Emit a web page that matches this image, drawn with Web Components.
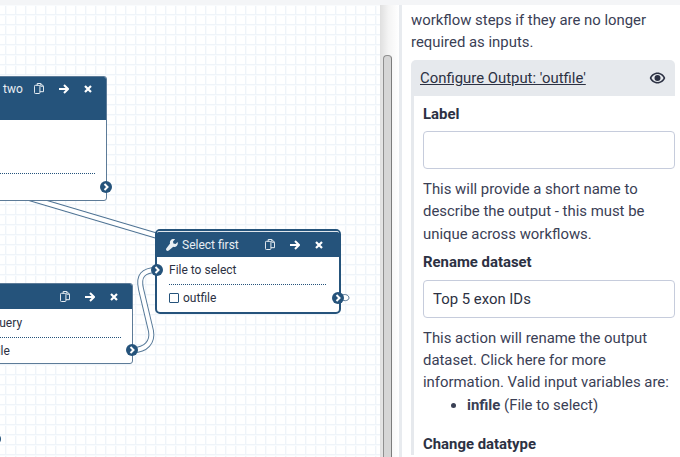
<!DOCTYPE html>
<html>
<head>
<meta charset="utf-8">
<style>
  html, body { margin: 0; height: 100%; overflow: hidden; }
  body { font-family: Roboto, "Liberation Sans", sans-serif; color: #2c3143; }
</style>
</head>
<body>
<wf-editor>
  <wf-canvas slot="canvas">
    <wf-node style="left:-30px;top:71px;width:137px;height:125px" title-text="two" title-left="32" header-height="43" header-pad="20" output-y="110" rule-y="96"></wf-node>
    <wf-node style="left:-23px;top:278px;width:156px;height:81px" header-height="25" output-y="66">
      <wf-row>Query</wf-row>
      <wf-row ruled>File</wf-row>
    </wf-node>
    <wf-node active tool style="left:155px;top:224px;width:186px;height:85px" title-text="Select first" title-left="9" header-height="26" input-y="39" output-y="67">
      <wf-row>File to select</wf-row>
      <wf-row ruled check>outfile</wf-row>
    </wf-node>
  </wf-canvas>
  <wf-side slot="side">
    <p>workflow steps if they are no longer required as inputs.</p>
    <wf-output-panel heading="Configure Output: 'outfile'">
      <wf-field label="Label" value="" help="This will provide a short name to describe the output - this must be unique across workflows."></wf-field>
      <wf-field label="Rename dataset" value="Top 5 exon IDs" help="This action will rename the output dataset. Click here for more information. Valid input variables are:" vars></wf-field>
      <wf-field label="Change datatype"></wf-field>
    </wf-output-panel>
  </wf-side>
</wf-editor>

<script>
// Page frame: top strip, canvas, scroll gutter, side panel
class WfEditor extends HTMLElement {
  constructor() {
    super();
    this.attachShadow({ mode: 'open' });
    this.shadowRoot.innerHTML = `
      <style>
        :host { display: flex; flex-direction: column; width: 680px; height: 457px; overflow: hidden; background: #fff; }
        .strip { flex: 0 0 5px; background: #f4f5f7; }
        .row { flex: 1; min-height: 0; display: flex; }
        .main { flex: 0 0 380px; overflow: hidden; }
        .gutter { flex: 0 0 19px; box-sizing: border-box; padding: 50px 0 0 3px; display: flex; background: linear-gradient(90deg, #dfdfdf, #f4f4f4 45%, #fff); }
        .thumb { width: 9px; box-sizing: border-box; background: #d6d6d6; border: 1px solid #8f8f8f; border-right-color: #7c7c7c; border-bottom: 0; border-radius: 4px 4px 0 0; }
        .bar { flex: 0 0 3px; background: #e8ebef; }
        .side { flex: 1; min-width: 0; }
      </style>
      <div class="strip"></div>
      <div class="row">
        <div class="main"><slot name="canvas"></slot></div>
        <div class="gutter"><div class="thumb"></div></div>
        <div class="bar"></div>
        <div class="side"><slot name="side"></slot></div>
      </div>`;
  }
}

class WfCanvas extends HTMLElement {
  constructor() {
    super();
    this.attachShadow({ mode: 'open' });
    this.shadowRoot.innerHTML = `
      <style>
        :host {
          display: block; position: relative; width: 380px; height: 452px; overflow: hidden;
          background-color: #fff;
          background-image:
            linear-gradient(#eff4f9 1px, #f9fbfd 1px, #f9fbfd 2px, transparent 2px),
            linear-gradient(90deg, #eff4f9 1px, #f9fbfd 1px, #f9fbfd 2px, transparent 2px);
          background-size: 10px 10px;
          background-position: 5px 9px;
        }
        svg { position: absolute; left: 0; top: 0; }
      </style>
      <svg width="380" height="452" fill="none">
        <g transform="translate(0 -5)">
          <path d="M6 191 L156 235.5" stroke="#4f7394" stroke-width="6"/>
          <path d="M6 191 L156 235.5" stroke="#fff" stroke-width="4"/>
          <path d="M133 350 C146 350 153 342 151 331 L141 289 C138 276 143 270 157 270" stroke="#587a99" stroke-width="6"/>
          <path d="M133 350 C146 350 153 342 151 331 L141 289 C138 276 143 270 157 270" stroke="#fff" stroke-width="4"/>
          <path d="M338 298 C344 292 349 295 349 298 C349 301 343 302 338 298Z" fill="#fff" stroke="#5d7b98"/>
          <circle cx="-5" cy="439" r="6" fill="#25537b"/>
        </g>
      </svg>
      <slot></slot>`;
  }
}

class WfNode extends HTMLElement {
  constructor() {
    super();
    this.attachShadow({ mode: 'open' });
  }
  connectedCallback() {
    const title = this.getAttribute('title-text') || '';
    const active = this.hasAttribute('active');
    const inY = this.getAttribute('input-y');
    const outY = this.getAttribute('output-y');
    const ruleY = this.getAttribute('rule-y');
    const term = (y, side) => `<svg class="term" style="top:${y - 6}px;${side}" width="12" height="12" viewBox="0 0 12 12"><circle cx="6" cy="6" r="6" fill="#25537b"/><path d="M4.5 3 L7.5 6 L4.5 9" fill="none" stroke="#fff" stroke-width="2"/></svg>`;
    const wrench = `<svg class="ico" width="12" height="12" viewBox="0 0 13 13"><path d="M12.6 3.2 10.4 5.4 8 4.9 7.6 2.6 9.8.4C8-.2 6.1.2 5.1 1.4 4.2 2.4 4 3.8 4.4 5L.5 9.9C-.2 10.7-.1 11.7.5 12.4 1.2 13.1 2.3 13.1 3 12.4L7.9 8.5C9.2 8.9 10.6 8.7 11.6 7.7 12.7 6.6 13.1 4.8 12.6 3.2Z" fill="#e8eef3"/></svg>`;
    this.shadowRoot.innerHTML = `
      <style>
        :host {
          display: block; position: absolute; box-sizing: border-box; background: #fff;
          border: ${active ? '2px solid #25537b' : '1px solid #5d7b98'};
          border-radius: ${active ? 5 : 3}px;
          font-size: 12px; color: #2c3143;
        }
        header {
          display: flex; align-items: center; gap: 15px; box-sizing: border-box;
          background: #25537b; color: #e8eef3;
          height: ${this.getAttribute('header-height') || 25}px;
          padding: 0 ${active ? 16 : 14}px ${this.getAttribute('header-pad') || 0}px ${this.getAttribute('title-left') || 0}px;
          border-radius: 2px 2px 0 0;
          ${active ? 'border-top: 1px solid #dfe6ec;' : ''}
        }
        .title { flex: 1 1 0; min-width: 0; display: flex; align-items: center; gap: 4px; white-space: nowrap; }
        .term { position: absolute; }
        .rule { position: absolute; left: 0; right: 11px; border-top: 1px dotted #25537b; }
        svg.ico { display: block; flex: none; }
        .body { padding: ${active ? '0 13px 0 12px' : '1px 11px 0 13px'}; }
      </style>
      <header>
        <span class="title">${this.hasAttribute('tool') ? wrench : ''}${title}</span>
        <svg class="ico" width="10" height="11" viewBox="0 0 11 12" fill="none" stroke="#e8eef3" stroke-width="1.1"><path d="M3.5 2.5V.5H7.5L10.5 3.5V9.5H6.5"/><path d="M7.5.5V3.5H10.5"/><rect x=".5" y="2.5" width="6" height="9" rx="1"/></svg>
        <svg class="ico" width="10" height="10" viewBox="0 0 10 10" fill="none" stroke="#fff" stroke-width="2"><path d="M0 5H8.5M5 1 9 5 5 9"/></svg>
        <svg class="ico" width="8" height="8" viewBox="0 0 8 8" fill="none" stroke="#fff" stroke-width="2.2"><path d="M1 1 7 7M7 1 1 7"/></svg>
      </header>
      <div class="body"><slot></slot></div>
      ${ruleY ? `<div class="rule" style="top:${ruleY}px"></div>` : ''}
      ${inY ? term(inY, 'left:-6px') : ''}
      ${outY ? term(outY, active ? 'right:-5px' : 'right:-6px') : ''}`;
  }
}

class WfRow extends HTMLElement {
  constructor() {
    super();
    this.attachShadow({ mode: 'open' });
  }
  connectedCallback() {
    const ruled = this.hasAttribute('ruled');
    this.shadowRoot.innerHTML = `
      <style>
        :host { display: block; font-size: 12px; line-height: 14px; }
        .wrap { display: flex; align-items: center; gap: 4px; white-space: nowrap; padding: ${ruled ? '6px 0' : '6px 0 7px'}; ${ruled ? 'border-top: 1px dotted #25537b;' : ''} }
        .box { width: 10px; height: 10px; box-sizing: border-box; border: 1px solid #25537b; border-radius: 1px; }
      </style>
      <div class="wrap">${this.hasAttribute('check') ? '<span class="box"></span>' : ''}<slot></slot></div>`;
  }
}

class WfSide extends HTMLElement {
  constructor() {
    super();
    this.attachShadow({ mode: 'open' });
    this.shadowRoot.innerHTML = `
      <style>
        :host { display: block; height: 452px; overflow: hidden; box-sizing: border-box; padding: 4px 5px 0 9px; font-size: 14.9px; line-height: 1.5; color: #3a4055; }
        ::slotted(p) { margin: 0 0 6px; }
      </style>
      <slot></slot>`;
  }
}

class WfOutputPanel extends HTMLElement {
  constructor() {
    super();
    this.attachShadow({ mode: 'open' });
  }
  connectedCallback() {
    this.shadowRoot.innerHTML = `
      <style>
        :host { display: block; background: #e6e9ed; border-radius: 5px 5px 0 0; padding-left: 3px; }
        .head { display: flex; align-items: center; justify-content: space-between; height: 36px; padding: 0 9px 0 6px; color: #2c3143; }
        .head span { text-decoration: underline; }
        svg { display: block; }
        .body { background: #fff; padding: 7px 0 0 9px; }
      </style>
      <div class="head"><span>${this.getAttribute('heading')}</span>
        <svg width="17" height="12" viewBox="0 0 16 12"><path d="M8 .5C4.5.5 1.5 2.8.2 6 1.5 9.2 4.5 11.5 8 11.5S14.5 9.2 15.8 6C14.5 2.8 11.5.5 8 .5ZM8 10C5.6 10 3.3 8.5 1.9 6 3.3 3.5 5.6 2 8 2S12.7 3.5 14.1 6C12.7 8.5 10.4 10 8 10Z" fill="#2c3143"/><circle cx="8" cy="6" r="3" fill="#2c3143"/></svg>
      </div>
      <div class="body"><slot></slot></div>`;
  }
}

class WfField extends HTMLElement {
  constructor() {
    super();
    this.attachShadow({ mode: 'open' });
  }
  connectedCallback() {
    const help = this.getAttribute('help');
    this.shadowRoot.innerHTML = `
      <style>
        :host { display: block; margin-bottom: 6px; }
        label { display: block; font-weight: 700; color: #2c3143; margin-bottom: 6px; }
        .input { box-sizing: border-box; height: 38px; border: 1px solid #c6ccdc; border-radius: 4px; background: #fff; padding: 0 9px; line-height: 36px; margin-bottom: 9px; color: #2c3143; }
        .help { margin: 0; }
        ul { margin: 0 0 17px; padding: 0 0 0 44px; }
      </style>
      <label>${this.getAttribute('label')}</label>
      ${this.hasAttribute('value') ? `<div class="input">${this.getAttribute('value')}</div>` : ''}
      ${help ? `<p class="help">${help}</p>` : ''}
      ${this.hasAttribute('vars') ? '<ul><li><b>infile</b> (File to select)</li></ul>' : ''}`;
  }
}

customElements.define('wf-editor', WfEditor);
customElements.define('wf-canvas', WfCanvas);
customElements.define('wf-node', WfNode);
customElements.define('wf-row', WfRow);
customElements.define('wf-side', WfSide);
customElements.define('wf-output-panel', WfOutputPanel);
customElements.define('wf-field', WfField);
</script>
</body>
</html>
